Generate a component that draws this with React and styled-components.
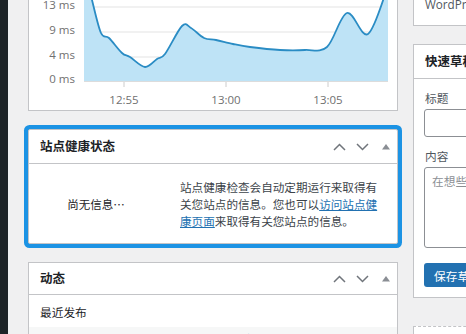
import React from 'react';
import styled, { createGlobalStyle } from 'styled-components';

const GlobalStyle = createGlobalStyle`
    html, body {
        margin: 0;
        padding: 0;
        height: 100%;
        overflow: hidden;
        background: #f0f0f1;
    }

    body {
        font-family: "Noto Sans CJK SC", "Open Sans", sans-serif;
        color: #1d2327;
    }
`;

const Screen = styled.div`
    display: flex;
    height: 334px;
    overflow: hidden;
`;

const Sidebar = styled.div`
    width: 8px;
    flex: none;
    background: #1d2327;
`;

const Main = styled.div`
    display: flex;
    gap: 15px;
    padding-left: 20px;
    margin-top: -12px;
`;

const Column = styled.div`
    display: flex;
    flex-direction: column;
    width: 370px;
    flex: none;
`;

const Postbox = styled.div`
    position: relative;
    box-sizing: border-box;
    background: #fff;
    border: 1px solid #c3c4c7;
    border-top-style: ${p => p.dashed ? 'dashed' : 'solid'};
    margin-bottom: ${p => p.gap ?? 18}px;
    height: ${p => p.h ? p.h + 'px' : 'auto'};
    border-radius: ${p => p.focused ? '2px' : '0'};
    box-shadow: ${p => p.focused ? '0 0 0 4px #1c93e4' : 'none'};
`;

const Header = styled.div`
    display: flex;
    align-items: center;
    height: ${p => p.h || 32}px;
    border-bottom: 1px solid #c3c4c7;
    padding-left: 11px;

    h2 {
        flex: 1;
        margin: 0;
        font-size: 12.5px;
        font-weight: 600;
        line-height: 1;
        white-space: nowrap;
    }
`;

const Handle = styled.button`
    width: 23px;
    height: 100%;
    padding: 0;
    border: 0;
    background: none;
    display: flex;
    align-items: center;
    justify-content: center;
`;

const ChartBox = styled.div`
    height: 121px;

    svg {
        display: block;
    }
`;

const HealthBody = styled.div`
    display: flex;
    align-items: center;
    height: 80px;
    font-size: 11.6px;
    line-height: 17px;
`;

const NoInfo = styled.div`
    width: 134px;
    text-align: center;
    font-size: 11.5px;
    color: #1d2327;
`;

const HealthText = styled.p`
    margin: 0 0 0 17px;
    white-space: nowrap;
    color: #3c434a;

    a {
        color: #2271b1;
        text-decoration: underline;
    }
`;

const SectionLabel = styled.div`
    height: 32px;
    display: flex;
    align-items: center;
    padding-left: 11px;
    font-size: 11.7px;
    color: #1d2327;
`;

const ListRow = styled.div`
    display: flex;
    justify-content: space-between;
    background: #f6f7f7;
    height: 30px;
    padding: 3px 14px 0 16px;
    font-size: 11.7px;
    line-height: 17px;
    color: #646970;

    a {
        color: #2271b1;
        text-decoration: none;
    }
`;

const Overview = styled.div`
    height: 36px;
    display: flex;
    align-items: flex-end;
    padding: 0 0 13px 11px;
    box-sizing: border-box;
    font-family: "Open Sans", "Noto Sans CJK SC", sans-serif;
    font-size: 11.7px;
    color: #50575e;
    white-space: nowrap;
`;

const Form = styled.div`
    display: flex;
    flex-direction: column;
    padding: 11px 10px 10px 10px;
`;

const Label = styled.label`
    font-size: 11.7px;
    line-height: 16px;
    color: #50575e;
    padding-left: 1px;
    margin-bottom: 3px;
    margin-top: ${p => p.top || 0}px;
`;

const Input = styled.div`
    box-sizing: border-box;
    height: ${p => p.h}px;
    border: 1px solid #8c8f94;
    border-radius: 3px;
    background: #fff;
    padding: 5px 7px;
    font-size: 11.7px;
    line-height: 16px;
    color: #8c8f94;
    white-space: nowrap;
`;

const SaveButton = styled.button`
    align-self: flex-start;
    margin-top: 15px;
    height: 24px;
    padding: 0 10px;
    border: 0;
    border-radius: 3px;
    background: #2271b1;
    color: #fff;
    font-family: "Noto Sans CJK SC", sans-serif;
    font-size: 11.7px;
    white-space: nowrap;
`;

const NewsTitle = styled.div`
    padding: 6px 11px 0;
    font-family: "Open Sans", "Noto Sans CJK SC", sans-serif;
    font-size: 12.5px;
    font-weight: 600;
    white-space: nowrap;
`;

const Chevron = ({ up }) => (
    <svg width="13" height="8" viewBox="0 0 13 8">
        <polyline
            points={up ? '1,7 6.5,1.5 12,7' : '1,1 6.5,6.5 12,1'}
            fill="none"
            stroke="#70757b"
            strokeWidth="1.5"
        />
    </svg>
);

const Toggle = () => (
    <svg width="8" height="6" viewBox="0 0 8 6">
        <polygon points="0,5.5 4,0 8,5.5" fill="#8a8e94" />
    </svg>
);

const Handles = () => (
    <>
        <Handle><Chevron up /></Handle>
        <Handle><Chevron /></Handle>
        <Handle><Toggle /></Handle>
    </>
);

const points = [
    [84, -34], [92, 0], [101, 33], [109, 38], [122, 53], [130, 57], [145, 67],
    [157, 59], [165, 54], [182, 26], [191, 28], [204, 38], [216, 40], [233, 44],
    [250, 47], [280, 50], [305, 50], [327, 47], [347, 13], [368, 34], [388, -14],
];

function smooth(pts) {
    let d = `M${pts[0][0]},${pts[0][1]}`;
    for (let i = 0; i < pts.length - 1; i++) {
        const p0 = pts[i - 1] || pts[i];
        const p1 = pts[i];
        const p2 = pts[i + 1];
        const p3 = pts[i + 2] || p2;
        const c1x = p1[0] + (p2[0] - p0[0]) / 6;
        const c1y = p1[1] + (p2[1] - p0[1]) / 6;
        const c2x = p2[0] - (p3[0] - p1[0]) / 6;
        const c2y = p2[1] - (p3[1] - p1[1]) / 6;
        d += ` C${c1x},${c1y} ${c2x},${c2y} ${p2[0]},${p2[1]}`;
    }
    return d;
}

const yLabels = [['13 ms', 7], ['9 ms', 32], ['4 ms', 57], ['0 ms', 81]];
const xLabels = [['12:55', 124], ['13:00', 226], ['13:05', 328]];

const Chart = () => {
    const line = smooth(points);
    return (
        <svg width="368" height="121" viewBox="29 -11 368 121">
            {yLabels.map(([t, y]) => (
                <g key={t}>
                    <line x1="84" x2="388" y1={y} y2={y} stroke="#e3e3e3" strokeWidth="1" />
                    <text x="75" y={y + 2} textAnchor="end" fontSize="11.5" fill="#707070"
                        fontFamily="Open Sans, sans-serif">{t}</text>
                </g>
            ))}
            <path d={`${line} L388,81 L84,81 Z`} fill="#bee3f6" />
            <path d={line} fill="none" stroke="#2a8cc4" strokeWidth="1.8" />
            <line x1="84" x2="388" y1="81.5" y2="81.5" stroke="#dcdcdc" />
            {xLabels.map(([t, x]) => (
                <g key={t}>
                    <line x1={x} x2={x} y1="82" y2="87" stroke="#cccccc" />
                    <text x={x} y="104" textAnchor="middle" fontSize="11.5" fill="#707070"
                        fontFamily="Open Sans, sans-serif">{t}</text>
                </g>
            ))}
        </svg>
    );
};

export default function App() {
    return (
        <>
            <GlobalStyle />
            <Screen>
                <Sidebar />
                <Main>
                    <Column>
                        <Postbox>
                            <ChartBox><Chart /></ChartBox>
                        </Postbox>

                        <Postbox focused h={115} gap={18}>
                            <Header h={33}>
                                <h2>站点健康状态</h2>
                                <Handles />
                            </Header>
                            <HealthBody>
                                <NoInfo>尚无信息…</NoInfo>
                                <HealthText>
                                    站点健康检查会自动定期运行来取得有<br />
                                    关您站点的信息。您也可以<a href="#">访问站点健<br />康页面</a>来取得有关您站点的信息。
                                </HealthText>
                            </HealthBody>
                        </Postbox>

                        <Postbox>
                            <Header h={31}>
                                <h2>动态</h2>
                                <Handles />
                            </Header>
                            <SectionLabel>最近发布</SectionLabel>
                            <ListRow>
                                <span>5月13日 下午1:07</span>
                                <a href="#">下一篇文章的标题在这里显示出来的</a>
                            </ListRow>
                        </Postbox>
                    </Column>

                    <Column>
                        <Postbox>
                            <Overview>WordPress 6.5.3，使用二〇二四主题。</Overview>
                        </Postbox>

                        <Postbox gap={28}>
                            <Header h={33}>
                                <h2>快速草稿</h2>
                            </Header>
                            <Form>
                                <Label>标题</Label>
                                <Input h={28} />
                                <Label top={11}>内容</Label>
                                <Input h={81}>在想些什么？</Input>
                                <SaveButton>保存草稿</SaveButton>
                            </Form>
                        </Postbox>

                        <Postbox dashed>
                            <NewsTitle>WordPress活动及新闻</NewsTitle>
                        </Postbox>
                    </Column>
                </Main>
            </Screen>
        </>
    );
}
